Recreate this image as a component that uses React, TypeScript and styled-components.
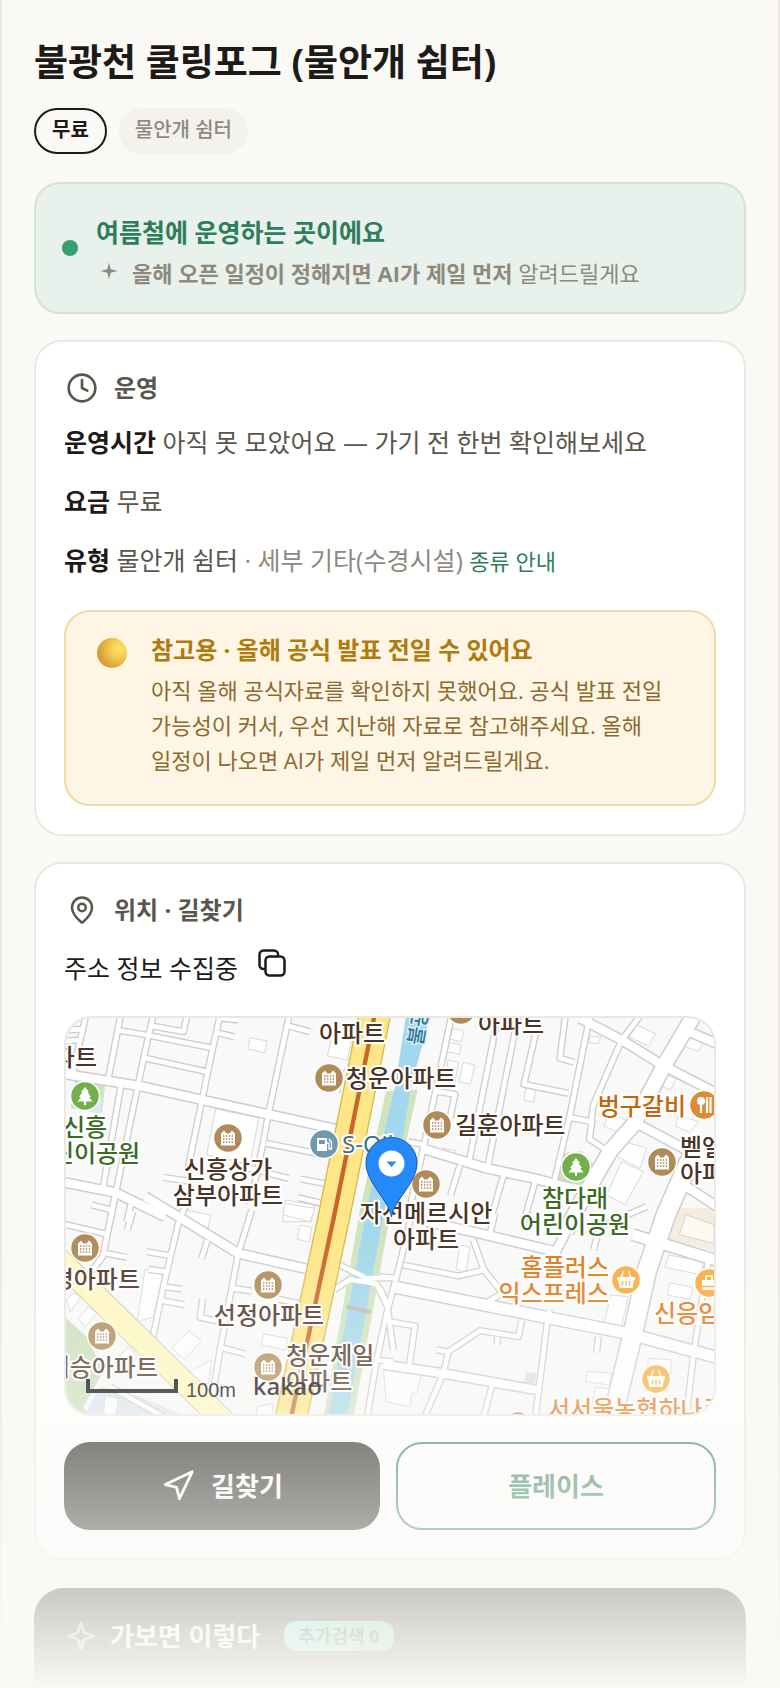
import { createGlobalStyle, styled } from "styled-components";
import { Clock, MapPin, Navigation } from "lucide-react";

const GlobalStyle = createGlobalStyle`
	* {
		box-sizing: border-box;
		margin: 0;
		padding: 0;
	}

	body {
		background: #faf9f6;
		color: #1c1b18;
		font-family: "Open Sans", "Noto Sans CJK KR", sans-serif;
		word-break: keep-all;
	}

	button {
		font-family: inherit;
		cursor: pointer;
	}
`;

const Page = styled.main`
	position: relative;
	display: flex;
	flex-direction: column;
	min-height: 100vh;
	padding: 38px 32px 0;
	border: solid #eae8e1;
	border-width: 0 2px;
`;

const Title = styled.h1`
	font-size: 37px;
	font-weight: 700;
	line-height: 48px;
`;

const Chips = styled.div`
	display: flex;
	gap: 12px;
	margin-top: 22px;
`;

const Chip = styled.span<{ $outlined?: boolean }>`
	height: 46px;
	padding: ${({ $outlined }) => ($outlined ? "4px 16px" : "4px 14px")};
	border-radius: 23px;
	font-size: 20px;
	line-height: 32px;
	font-weight: ${({ $outlined }) => ($outlined ? 700 : 500)};
	color: ${({ $outlined }) => ($outlined ? "#1c1b18" : "#8f897c")};
	background: ${({ $outlined }) => ($outlined ? "transparent" : "#f3f2ed")};
	border: 2px solid ${({ $outlined }) => ($outlined ? "#1c1b18" : "#f3f2ed")};
`;

const Banner = styled.section`
	display: flex;
	align-items: center;
	gap: 18px;
	margin-top: 28px;
	padding: 21px 26px;
	border: 2px solid #cfe5d8;
	border-radius: 26px;
	background: #e8f1eb;
`;

const BannerBody = styled.div`
	padding-top: 7px;
`;

const Dot = styled.span`
	width: 16px;
	height: 16px;
	border-radius: 50%;
	background: #35a06b;
`;

const BannerTitle = styled.h2`
	font-size: 25px;
	font-weight: 700;
	line-height: 40px;
	color: #2e7d5b;
`;

const BannerText = styled.p`
	display: flex;
	gap: 12px;
	margin-top: 3px;
	padding-left: 2px;
	font-size: 22px;
	line-height: 36px;
	color: #8f897c;

	svg {
		margin-top: 5px;
	}
`;

const Card = styled.section`
	margin-top: 26px;
	padding: 28px;
	border: 2px solid #eae8e1;
	border-radius: 28px;
	background: #ffffff;
`;

const CardHeading = styled.h2`
	display: flex;
	align-items: center;
	gap: 14px;
	font-size: 24px;
	font-weight: 700;
	line-height: 36px;
	color: #5a564c;
`;

const IconBox = styled.span`
	display: flex;
	justify-content: center;
	width: 36px;
`;

const Facts = styled.div`
	display: flex;
	flex-direction: column;
	gap: 19px;
	margin-top: 16px;
`;

const Fact = styled.p`
	font-size: 25px;
	line-height: 40px;
	color: #5a564c;

	b {
		color: #1c1b18;
	}
`;

const Muted = styled.span`
	color: #8f897c;
`;

const GuideLink = styled.a`
	font-size: 22px;
	line-height: 1;
	color: #2e7d5b;
	text-decoration: none;
`;

const Notice = styled.aside`
	display: flex;
	gap: 24px;
	margin-top: 30px;
	padding: 20px 28px 26px 31px;
	border: 2px solid #f0dba5;
	border-radius: 26px;
	background: #fff5e4;
`;

const Orb = styled.span`
	flex-shrink: 0;
	width: 30px;
	height: 30px;
	margin-top: 6px;
	border-radius: 50%;
	background: radial-gradient(circle at 75% 36%, #ffe669 0%, #f5cc50 30%, #dda63e 62%, #cf9440 85%, #d97a6a 100%);
`;

const NoticeTitle = styled.h3`
	font-size: 24px;
	font-weight: 700;
	line-height: 36px;
	color: #b07a0c;
`;

const NoticeText = styled.p`
	margin-top: 5px;
	font-size: 22px;
	line-height: 35px;
	color: #8a6a2f;
`;

const Address = styled.div`
	display: flex;
	align-items: flex-start;
	gap: 20px;
	margin-top: 20px;
	font-size: 25px;
	line-height: 40px;
`;

const CopyButton = styled.button`
	display: flex;
	padding: 1px 0;
	border: 0;
	background: none;
	color: #1c1b18;
`;

const MapFrame = styled.div`
	height: 400px;
	margin-top: 28px;
	border: 2px solid #eae8e1;
	border-radius: 28px;
	overflow: hidden;
	background: #f9f9f9;

	svg {
		display: block;
		width: 100%;
		height: 100%;
	}
`;

const Actions = styled.div`
	display: flex;
	gap: 16px;
	margin-top: 26px;
`;

const ActionButton = styled.button<{ $primary?: boolean }>`
	flex: 1 1 0;
	display: flex;
	align-items: center;
	justify-content: center;
	gap: 16px;
	height: 88px;
	border: ${({ $primary }) => ($primary ? "0" : "2px solid #2e7d5b")};
	border-radius: 26px;
	font-size: 26px;
	font-weight: 700;
	line-height: 36px;
	color: ${({ $primary }) => ($primary ? "#ffffff" : "#2e7d5b")};
	background: ${({ $primary }) => ($primary ? "#1c1b18" : "#ffffff")};
`;

const DarkCard = styled.section`
	flex: 1;
	margin-top: 28px;
	padding: 28px 30px 24px;
	border-radius: 30px 30px 0 0;
	background: #1c1b18;
`;

const DarkHeading = styled.h2`
	display: flex;
	align-items: center;
	gap: 12px;
	font-size: 26px;
	line-height: 40px;
	color: #ffffff;
`;

const Badge = styled.span`
	margin-left: 12px;
	padding: 0 14px;
	border-radius: 12px;
	font-size: 18px;
	line-height: 30px;
	color: #1c1b18;
	background: linear-gradient(100deg, #4be0c8, #58c07c);
`;

const Fade = styled.div`
	position: absolute;
	right: -2px;
	bottom: 0;
	left: -2px;
	height: 460px;
	background: linear-gradient(to bottom, rgba(250, 249, 246, 0), #faf9f6);
	pointer-events: none;
`;

interface ITile {
	x: number;
	y: number;
	narrow: string;
	wide: string;
	buildings: string;
}

// four tiles at three units per pixel
const tiles: ITile[] = [
	{
		x: -48,
		y: -39,
		narrow:
			"M212 30L176 215M310 30L285 140L262 250L198 560L180 650M214 235L160 545M200 75L290 90L482 128M300 62L400 80L412 30M288 160L470 200M510 30L482 160L455 290L412 500M505 84L552 95M500 38L565 45M718 30L690 160L655 330L640 410L600 600M712 62L780 80M648 415L800 445M340 517L425 530M560 480L715 520M752 522L830 537M745 578L815 595M125 600L185 615M245 590L230 650M108 30L92 100L66 215M40 76L100 72M40 108L90 105",
		wide: "M30 205L270 243L458 285L655 328L870 375M30 530L195 562L345 635",
		buildings:
			"M600 98L652 108L644 143L593 132ZM497 312L626 338L600 478L470 450ZM850 75L908 88L892 165L832 152ZM706 585L792 600L784 650L698 650ZM860 230L884 190L870 266Z",
	},
	{
		x: 942,
		y: -39,
		narrow:
			"M215 30L190 150L130 430L80 650M355 30L265 480M415 30L320 500M475 50L432 238L565 265M555 40L540 160L582 172M630 30L570 330L518 550M570 338L636 350L628 402L685 440M790 20L725 105L640 300L632 360M165 258L225 268L210 340M240 480L212 570M372 505L330 650M468 520L432 650M135 420L85 410",
		wide: "M600 40L725 105L855 185L1020 270M915 75L1020 120M125 430L320 490L460 520L570 548M770 355L920 435L1020 480M920 545L1020 610",
		buildings:
			"M218 70L252 78L244 110L210 102ZM208 112L244 120L238 148L202 140ZM250 172L284 180L272 238L236 230ZM204 165L236 172L224 235L196 230ZM438 248L468 256L460 292L432 285ZM632 94L662 96L655 116L625 112ZM770 60L826 86L806 124L748 96ZM895 90L972 110L955 138L890 118ZM850 205L888 220L872 255L836 240ZM190 430L228 438L222 462L188 455ZM690 320L745 350L728 390L672 362ZM720 405L800 430L780 490L712 455ZM725 470L790 500L735 600L680 570ZM895 330L955 350L930 382L888 365Z",
	},
	{
		x: -48,
		y: 576,
		narrow:
			"M195 -40L158 140L105 210M405 -10L385 40L340 230L305 400M248 5L232 60M605 0L565 130L510 420L478 620M168 130L230 142M290 125L365 138M340 230L395 237M325 270L402 284M548 235L605 243M685 268L745 280M458 268L450 322L510 335M515 413L587 432M472 90L455 145M40 42L168 72M180 530L340 620M296 178L345 185M870 165L950 205L1030 203M852 240L900 208L980 222L1012 290L1030 420M1030 455L980 450L950 630",
		wide: "M285 -40L385 20L565 130L775 178",
		buildings:
			"M405 0L482 15L474 55L395 28ZM703 -20L795 -5L780 36L700 15ZM750 45L785 52L778 96L742 88ZM50 270L72 248L92 262L60 305ZM85 325L115 290L140 310L105 350ZM365 412L418 362L454 394L402 448ZM642 372L712 385L705 420L632 405ZM410 490L485 450L475 520L440 520ZM166 556L206 566L196 620L160 610ZM622 590L670 580L664 630L618 620ZM285 178L342 188L310 320L262 335ZM195 455L235 410L260 440L225 480Z",
	},
	{
		x: 942,
		y: 576,
		narrow:
			"M70 165L235 198L312 180L368 250L318 278M105 -30L60 160L20 310L-10 450M280 90L312 180M170 420L205 425L300 362L415 380L425 330M205 425L190 490L130 630M352 380L352 405M25 335L105 348L88 465M508 300L500 350L465 630M655 380L650 428M338 520L308 630M985 150L942 420L918 630M0 200L50 205M0 235L25 290M330 70L345 10M640 120L660 50L800 -10",
		wide: "M140 35L290 68L528 125L610 -40M10 464L190 490L470 540",
		buildings:
			"M240 105L270 112L258 186L228 178ZM10 470L125 490L110 550L95 550L90 590L18 575ZM866 135L970 155L965 195L855 172ZM870 218L938 232L930 268L862 255ZM692 255L745 260L724 350L672 342ZM622 484L694 490L688 525L616 515ZM645 532L690 536L680 620L632 612ZM805 445L875 450L868 520L800 510Z",
	},
];

interface ILabel {
	x: number;
	y: number;
	lines: string[];
	color?: string;
	anchor?: "start" | "middle" | "end";
}

const brown = "#4b3325";
const green = "#3a6b23";
const orange = "#e07818";

const labels: ILabel[] = [
	{ x: 31, y: 39, lines: ["아파트"], anchor: "end" },
	{ x: 19, y: 109, lines: ["신흥", "어린이공원"], color: green },
	{ x: 162, y: 151, lines: ["신흥상가", "삼부아파트"] },
	{ x: 286, y: 15, lines: ["아파트"] },
	{ x: 280, y: 60, lines: ["청운아파트"], anchor: "start" },
	{ x: 276, y: 126, lines: ["S-Oil"], color: "#3a6f87", anchor: "start" },
	{ x: 445, y: 6, lines: ["아파트"] },
	{ x: 389, y: 107, lines: ["길훈아파트"], anchor: "start" },
	{ x: 360, y: 195, lines: ["자선메르시안", "아파트"] },
	{ x: 509, y: 180, lines: ["참다래", "어린이공원"], color: green },
	{ x: 620, y: 88, lines: ["벙구갈비"], color: "#c4650a", anchor: "end" },
	{ x: 614, y: 129, lines: ["벧엘", "아파트"], anchor: "start" },
	{ x: 543, y: 249, lines: ["홈플러스", "익스프레스"], color: orange, anchor: "end" },
	{ x: 588, y: 295, lines: ["신응암시장"], color: orange, anchor: "start" },
	{ x: 482, y: 391, lines: ["서서울농협하나로"], color: orange, anchor: "start" },
	{ x: 74, y: 261, lines: ["경아파트"], anchor: "end" },
	{ x: 92, y: 349, lines: ["대승아파트"], anchor: "end" },
	{ x: 203, y: 297, lines: ["선정아파트"] },
	{ x: 220, y: 337, lines: ["청운제일", "아파트"], anchor: "start" },
];

const apartments = [
	[162, 120],
	[263, 60],
	[395, -8],
	[371, 107],
	[360, 166],
	[596, 144],
	[19, 230],
	[36, 318],
	[202, 267],
	[202, 349],
];

const markets = [
	[560, 262],
	[590, 361],
];

const parks = [
	[19, 78],
	[510, 149],
];

function MapLabel({ x, y, lines, color = brown, anchor = "middle" }: ILabel) {
	return (
		<text
			fontSize="24"
			fontWeight="500"
			fill={color}
			stroke="#ffffff"
			strokeWidth="4"
			strokeLinejoin="round"
			paintOrder="stroke"
			textAnchor={anchor}
		>
			{lines.map((line, i) => (
				<tspan key={line} x={x} y={y + 9 + i * 26}>
					{line}
				</tspan>
			))}
		</text>
	);
}

function Poi({ x, y, color, children }: { x: number; y: number; color: string; children?: React.ReactNode }) {
	return (
		<g transform={`translate(${x} ${y})`}>
			<circle r="14.5" fill={color} stroke="#ffffff" strokeWidth="1.5" />
			{children}
		</g>
	);
}

function ApartmentPoi({ x, y }: { x: number; y: number }) {
	return (
		<Poi x={x} y={y} color="#b08a58">
			<path d="M-7 7.500V-4.500L-4 -7.500L-1.500 -4.500H1.500L4 -7.500L7 -4.500V7.500Z" fill="#ffffff" />
			<path d="M-5 -2H6M-5 1H6M-5 4H6" stroke="#a87f4c" strokeWidth="1.300" strokeDasharray="1.400 1.500" />
		</Poi>
	);
}

function AreaMap() {
	return (
		<svg viewBox="0 0 648 396" preserveAspectRatio="xMidYMid slice" role="img" aria-label="주변 지도">
			<g transform="scale(0.33333)" fill="none" strokeLinejoin="round">
				<path d="M28 183L118 196L108 286L14 271Z" fill="#cfe3bf" />
				<path d="M70 240L110 236L104 286L60 280Z" fill="#dbe8f2" />
				<path d="M1487 405L1545 400L1592 446L1560 506L1472 486Z" fill="#cfe3bf" />
				<path d="M1832 570L1810 668L1950 700V570Z" fill="#f4ecdf" />
				<path d="M1860 590L1840 650L1944 676V620Z" fill="#fdfaf6" stroke="#ddd0c0" strokeWidth="3" />
				<path d="M0 900L62 956L112 1060L52 1166L72 1200H0Z" fill="#cbdfba" />
				<path d="M102 1106L222 1136L372 1200H50Z" fill="#dbe6f0" />
				<path d="M1382 1061L1412 1066L1407 1098L1374 1094Z" fill="#d3e3ee" />
				{tiles.map((t) => (
					<path key={t.buildings} transform={`translate(${t.x} ${t.y})`} d={t.buildings} fill="#fefefe" stroke="#d8d8d8" strokeWidth="3" />
				))}
				<g stroke="#cdcdcd">
					{tiles.map((t) => (
						<g key={t.narrow} transform={`translate(${t.x} ${t.y})`}>
							<path d={t.narrow} strokeWidth="22" />
							<path d={t.wide} strokeWidth="34" />
						</g>
					))}
					<path d="M1885 -10L1790 150L1702 320L1632 400L1540 560L1500 640" strokeWidth="52" />
					<path d="M1960 380L1870 430L1800 590L1742 760L1702 940L1640 1200" strokeWidth="64" />
					<path d="M990 808L1450 900L1680 945L1960 1020" strokeWidth="42" />
					<path d="M1700 650L1960 730" strokeWidth="40" />
				</g>
				<path d="M960 220L1055 215L975 576L862 1200H772L882 576Z" fill="#d0e3c0" />
				<path d="M1020 -5L1092 -5L1034 211L1010 360L955 576L842 1200H785L902 576L950 360L986 211Z" fill="#a3d8ec" />
				<g stroke="#ffffff">
					{tiles.map((t) => (
						<g key={t.narrow} transform={`translate(${t.x} ${t.y})`}>
							<path d={t.narrow} strokeWidth="14" />
							<path d={t.wide} strokeWidth="25" />
						</g>
					))}
					<path d="M1885 -10L1790 150L1702 320L1632 400L1540 560L1500 640" strokeWidth="43" />
					<path d="M1960 380L1870 430L1800 590L1742 760L1702 940L1640 1200" strokeWidth="55" />
					<path d="M990 808L1450 900L1680 945L1960 1020" strokeWidth="33" />
					<path d="M1700 650L1960 730" strokeWidth="31" />
				</g>
				<path d="M842 866L914 882" stroke="#c4b9b8" strokeWidth="13" />
				<path d="M-30 716L480 1216" stroke="#d3cdb8" strokeWidth="72" />
				<path d="M-30 716L480 1216" stroke="#fff8c0" strokeWidth="65" />
				<path d="M926 -10L805 591L675 1200" stroke="#d3bb4e" strokeWidth="98" />
				<path d="M926 -10L805 591L675 1200" stroke="#ffe687" strokeWidth="90" />
				<path d="M926 -10L805 591L675 1200" stroke="#c8652c" strokeWidth="13" />
			</g>

			<text transform="translate(356 28) rotate(-80)" fontSize="20" fontWeight="500" fill="#2f7896" stroke="#d8eff8" strokeWidth="3" paintOrder="stroke">
				불광천
			</text>
			{apartments.map(([x, y]) => (
				<ApartmentPoi key={`${x}-${y}`} x={x} y={y} />
			))}
			{parks.map(([x, y]) => (
				<Poi key={x} x={x} y={y} color="#74af4e">
					<path d="M0 -9L4 -4H2.500L6 1H4L7.500 5.500H1V9H-1V5.500H-7.500L-4 1H-6L-2.500 -4H-4Z" fill="#ffffff" />
				</Poi>
			))}
			{markets.map(([x, y]) => (
				<Poi key={x} x={x} y={y} color="#fbab3f">
					<path d="M-9 -3H9V0H8L6.500 8H-6.500L-8 0H-9Z" fill="#ffffff" />
					<path d="M-5 -2L-2.500 -9M5 -2L2.500 -9" stroke="#ffffff" strokeWidth="1.500" />
					<path d="M-3.500 1V5.500M0 1V5.500M3.500 1V5.500" stroke="#fbab3f" strokeWidth="1.500" />
				</Poi>
			))}
			<Poi x={258} y={126} color="#7199ad">
				<path d="M-7 -6H3V7H-7ZM-5 -4V0H1V-4Z" fill="#ffffff" fillRule="evenodd" />
				<path d="M3 -1H5V5H7.500V-2L5 -5" fill="none" stroke="#ffffff" strokeWidth="1.300" />
			</Poi>
			<Poi x={638} y={87} color="#dd8b37">
				<circle cx="-3" cy="-4" r="4" fill="#ffffff" />
				<path d="M-3 -2V8M3 -8V8M6.500 -8V8" stroke="#ffffff" strokeWidth="2.200" />
			</Poi>
			<Poi x={643} y={265} color="#fbab3f">
				<path d="M-7 -3H7V7H-7Z" fill="#ffffff" />
				<path d="M-3 -3V-7H3V-3" fill="none" stroke="#ffffff" strokeWidth="1.500" />
				<path d="M-7 3.500H7" stroke="#fbab3f" strokeWidth="1.500" />
			</Poi>
			<Poi x={452} y={408} color="#c47a3a" />
			{labels.map((label) => (
				<MapLabel key={`${label.x}-${label.y}`} {...label} />
			))}

			<path
				d="M325.500 199C323 182 300 165 300 145A25.500 25.500 0 0 1 351 145C351 165 328 182 325.500 199Z"
				fill="#2489f9"
				stroke="#1759ad"
				strokeWidth="1"
			/>
			<circle cx="325.500" cy="145.500" r="13" fill="#ffffff" />
			<path d="M320.500 143.500H330.500L325.500 149Z" fill="#2489f9" />

			<path d="M22 361V373H110V361" fill="none" stroke="#000000" strokeWidth="4" />
			<text x="120" y="379" fontSize="20" fontFamily="Liberation Sans, Arial, sans-serif" fill="#000000">
				100m
			</text>
			<text x="187" y="377" fontSize="24" fontWeight="500" fontFamily="Noto Sans, sans-serif" fill="#000000">
				kakao
			</text>
		</svg>
	);
}

function App() {
	return (
		<>
			<GlobalStyle />
			<Page>
				<Title>불광천 쿨링포그 (물안개 쉼터)</Title>
				<Chips>
					<Chip $outlined>무료</Chip>
					<Chip>물안개 쉼터</Chip>
				</Chips>

				<Banner>
					<Dot />
					<BannerBody>
						<BannerTitle>여름철에 운영하는 곳이에요</BannerTitle>
						<BannerText>
							<svg width="22" height="22" viewBox="0 0 22 22" aria-hidden="true">
								<path d="M11 2.500L12.700 9.300L19.500 11L12.700 12.700L11 19.500L9.300 12.700L2.500 11L9.300 9.300Z" fill="currentColor" />
							</svg>
							<span>
								<b>올해 오픈 일정이 정해지면 AI가 제일 먼저</b> 알려드릴게요
							</span>
						</BannerText>
					</BannerBody>
				</Banner>

				<Card>
					<CardHeading>
						<IconBox>
							<Clock size={32} />
						</IconBox>
						운영
					</CardHeading>
					<Facts>
						<Fact>
							<b>운영시간</b> 아직 못 모았어요 — 가기 전 한번 확인해보세요
						</Fact>
						<Fact>
							<b>요금</b> 무료
						</Fact>
						<Fact>
							<b>유형</b> 물안개 쉼터 <Muted>· 세부 기타(수경시설)</Muted> <GuideLink href="#types">종류 안내</GuideLink>
						</Fact>
					</Facts>
					<Notice>
						<Orb />
						<div>
							<NoticeTitle>참고용 · 올해 공식 발표 전일 수 있어요</NoticeTitle>
							<NoticeText>
								아직 올해 공식자료를 확인하지 못했어요. 공식 발표 전일 가능성이 커서, 우선 지난해 자료로 참고해주세요. 올해 일정이
								나오면 AI가 제일 먼저 알려드릴게요.
							</NoticeText>
						</div>
					</Notice>
				</Card>

				<Card>
					<CardHeading>
						<IconBox>
							<MapPin size={30} />
						</IconBox>
						위치 · 길찾기
					</CardHeading>
					<Address>
						주소 정보 수집중
						<CopyButton type="button" aria-label="주소 복사">
							<svg width="28" height="28" viewBox="0 0 28 28" fill="none" stroke="currentColor" strokeWidth="2.500" aria-hidden="true">
								<rect x="7.500" y="7.500" width="19" height="19" rx="4" />
								<path d="M7.500 20H5.500A4 4 0 0 1 1.500 16V5.500A4 4 0 0 1 5.500 1.500H16A4 4 0 0 1 20 5.500V7.500" />
							</svg>
						</CopyButton>
					</Address>
					<MapFrame>
						<AreaMap />
					</MapFrame>
					<Actions>
						<ActionButton type="button" $primary>
							<Navigation size={34} />
							길찾기
						</ActionButton>
						<ActionButton type="button">플레이스</ActionButton>
					</Actions>
				</Card>

				<DarkCard>
					<DarkHeading>
						<svg width="34" height="34" viewBox="0 0 24 24" fill="none" stroke="#5fd3a0" strokeWidth="2" strokeLinejoin="round" aria-hidden="true">
							<path d="M12 3L14.300 9.700L21 12L14.300 14.300L12 21L9.700 14.300L3 12L9.700 9.700Z" />
						</svg>
						가보면 이렇다
						<Badge>추가검색 0</Badge>
					</DarkHeading>
				</DarkCard>
				<Fade />
			</Page>
		</>
	);
}

export default App;
